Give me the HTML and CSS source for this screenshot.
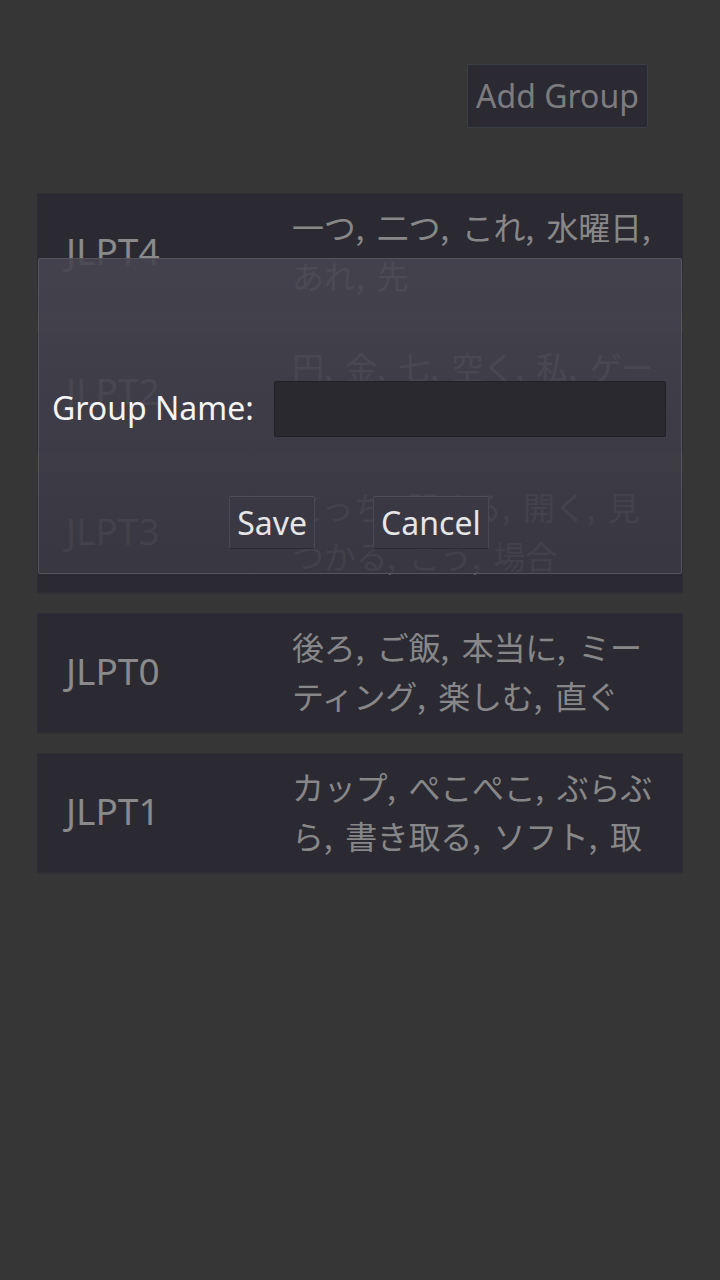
FILE: index.html
```html
<!DOCTYPE html>
<html lang="ja">
<head>
<meta charset="utf-8">
<link rel="stylesheet" href="styles.css">
</head>
<body>
<div class="screen">
  <header class="toolbar">
    <button class="add-btn">Add Group</button>
  </header>
  <main class="groups">
    <div class="group">
      <div class="group-name">JLPT4</div>
      <div class="group-words">一つ, 二つ, これ, 水曜日,<br>あれ, 先</div>
    </div>
    <div class="group">
      <div class="group-name">JLPT2</div>
      <div class="group-words">円, 金, 七, 空く, 私, ゲー<br>ム, 食べる, 今</div>
    </div>
    <div class="group">
      <div class="group-name">JLPT3</div>
      <div class="group-words">こっち, 閉める, 開く, 見<br>つかる, こう, 場合</div>
    </div>
    <div class="group">
      <div class="group-name">JLPT0</div>
      <div class="group-words">後ろ, ご飯, 本当に, ミー<br>ティング, 楽しむ, 直ぐ</div>
    </div>
    <div class="group">
      <div class="group-name">JLPT1</div>
      <div class="group-words">カップ, ぺこぺこ, ぶらぶ<br>ら, 書き取る, ソフト, 取</div>
    </div>
  </main>

  <div class="dialog">
    <div class="field">
      <label class="field-label">Group Name:</label>
      <div class="field-input"></div>
    </div>
    <div class="actions">
      <button class="dlg-btn">Save</button>
      <button class="dlg-btn">Cancel</button>
    </div>
  </div>
</div>
</body>
</html>
```

FILE: styles.css
```css
* { box-sizing: border-box; }

html, body {
  margin: 0;
  padding: 0;
  background: #363636;
}

.screen {
  position: relative;
  width: 720px;
  height: 1280px;
  font-family: "Noto Sans", "Noto Sans CJK JP", sans-serif;
}

.toolbar {
  display: flex;
  justify-content: flex-end;
  padding: 64px 72px 0 0;
}

.add-btn {
  width: 181px;
  height: 64px;
  padding: 0;
  background: #2b2a33;
  border: 1px solid #3a3e48;
  border-radius: 2px;
  color: #7c7c7e;
  font-family: "Noto Sans", sans-serif;
  font-size: 32px;
  line-height: 1;
}

.groups {
  display: flex;
  flex-direction: column;
  gap: 20px;
  padding: 65px 37px 0 37px;
}

.group {
  display: grid;
  grid-template-columns: 254px 1fr;
  align-items: center;
  height: 120px;
  background: #2b2a32;
  border: 1px solid #2e2d34;
  box-shadow: 0 1px 0 #303035;
}

.group-name {
  padding-left: 28px;
  padding-bottom: 6px;
  color: #8a8a8c;
  font-family: "Noto Sans", sans-serif;
  font-size: 37px;
  line-height: 1;
}

.group-words {
  padding-bottom: 5px;
  color: #878789;
  font-family: "Noto Sans CJK JP", sans-serif;
  font-size: 32px;
  line-height: 49px;
  white-space: nowrap;
  word-spacing: 6px;
  letter-spacing: -0.3px;
}

.dialog {
  position: absolute;
  left: 38px;
  top: 258px;
  width: 644px;
  height: 316px;
  display: flex;
  flex-direction: column;
  padding: 122px 15px 0 15px;
  background: linear-gradient(to bottom, rgba(70, 68, 80, 0.9), rgba(58, 56, 66, 0.9));
  border: 1px solid #55535c;
  border-radius: 2px;
}

.field {
  display: flex;
  align-items: center;
  gap: 20px;
  height: 56px;
}

.field-label {
  margin-left: -2px;
  padding-bottom: 3px;
  color: #f4f4f4;
  font-family: "Noto Sans", sans-serif;
  font-size: 32px;
  white-space: nowrap;
}

.field-input {
  flex: 1;
  height: 56px;
  background: #2a2930;
  border: 1px solid #202026;
  border-radius: 2px;
}

.actions {
  display: flex;
  justify-content: center;
  gap: 58px;
  margin-top: 59px;
  padding-right: 2px;
}

.dlg-btn {
  height: 53px;
  padding: 0 7px;
  background: #3a3843;
  border: 1px solid #4a4852;
  border-top-color: #504e58;
  border-bottom-color: #2c2b31;
  border-radius: 2px;
  color: #e6e6e6;
  font-family: "Noto Sans", sans-serif;
  font-size: 32px;
  line-height: 1;
}
```
